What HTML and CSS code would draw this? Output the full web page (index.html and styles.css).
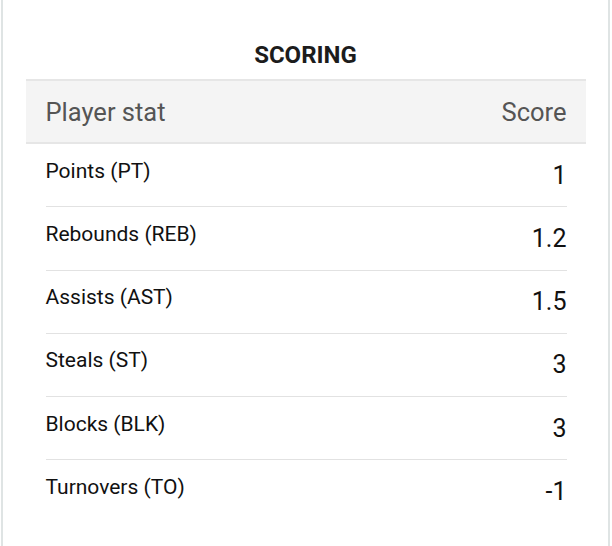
FILE: index.html
```html
<!DOCTYPE html>
<html lang="en">
<head>
    <meta charset="UTF-8">
    <meta name="viewport" content="width=device-width, initial-scale=1.0">
    <title>Scoring</title>
    <link rel="stylesheet" href="styles.css">
</head>
<body>

<div class="card">
    <h2 class="card-title">SCORING</h2>

    <div class="score-table">
        <!-- Header -->
        <div class="score-head">
            <span>Player stat</span>
            <span>Score</span>
        </div>

        <!-- Rows -->
        <div class="score-row">
            <span class="stat-name">Points (PT)</span>
            <span class="stat-value">1</span>
        </div>
        <div class="score-row">
            <span class="stat-name">Rebounds (REB)</span>
            <span class="stat-value">1.2</span>
        </div>
        <div class="score-row">
            <span class="stat-name">Assists (AST)</span>
            <span class="stat-value">1.5</span>
        </div>
        <div class="score-row">
            <span class="stat-name">Steals (ST)</span>
            <span class="stat-value">3</span>
        </div>
        <div class="score-row">
            <span class="stat-name">Blocks (BLK)</span>
            <span class="stat-value">3</span>
        </div>
        <div class="score-row last">
            <span class="stat-name">Turnovers (TO)</span>
            <span class="stat-value">-1</span>
        </div>
    </div>
</div>

</body>
</html>
```

FILE: styles.css
```css
* {
    box-sizing: border-box;
}

body {
    margin: 0;
    background-color: #fff;
    font-family: Roboto, 'Liberation Sans', Arial, sans-serif;
}

.card {
    margin: 0 2px 0 1px;
    min-height: 100vh;
    border-left: 2px solid #dfe4e4;
    border-right: 2px solid #dfe4e4;
    padding-top: 41px;
}

.card-title {
    margin: 0 0 10px;
    text-align: center;
    font-size: 24px;
    line-height: 28px;
    font-weight: 700;
    color: #1c1c1c;
}

.score-table {
    width: 560px;
    margin: 0 auto;
}

.score-head {
    display: flex;
    justify-content: space-between;
    align-items: center;
    height: 65px;
    padding: 0 19px 0 20px;
    background-color: #f4f4f4;
    border-top: 2px solid #e6e6e6;
    border-bottom: 2px solid #e6e6e6;
    font-size: 25.5px;
    color: #555;
}

.score-row {
    display: flex;
    justify-content: space-between;
    align-items: center;
    height: 63.25px;
    margin: 0 19px 0 20px;
    border-bottom: 1px solid #e2e2e2;
    color: #111;
}

.score-row.last {
    border-bottom: none;
}

.stat-name {
    font-size: 21px;
    padding-bottom: 9px;
}

.stat-value {
    font-size: 25px;
}
```
